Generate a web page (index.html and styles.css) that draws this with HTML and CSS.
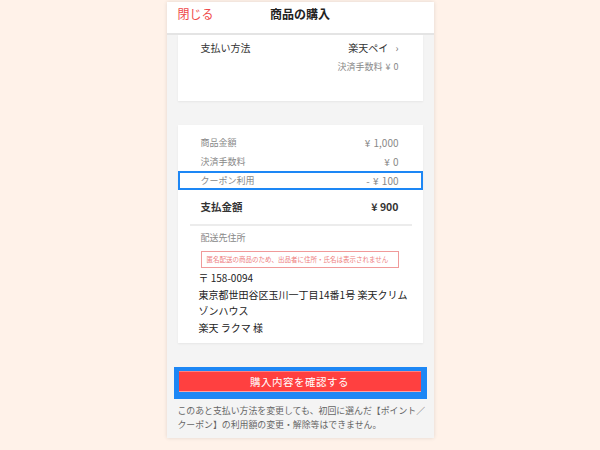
FILE: index.html
```html
<!DOCTYPE html>
<html lang="ja">
<head>
  <meta charset="UTF-8" />
  <meta name="viewport" content="width=device-width, initial-scale=1.0" />
  <title>商品の購入</title>
  <link rel="stylesheet" href="styles.css">
</head>
<body>

  <div class="phone">
    <!-- Header -->
    <header class="topbar">
      <span class="close">閉じる</span>
      <h1>商品の購入</h1>
    </header>

    <div class="content">
      <!-- Payment method -->
      <section class="card pay-card">
        <div class="pay-row">
          <span>支払い方法</span>
          <span class="pay-value">楽天ペイ <span class="chev">›</span></span>
        </div>
        <div class="fee-note">決済手数料 ¥ 0</div>
      </section>

      <!-- Summary -->
      <section class="card summary">
        <div class="row"><span>商品金額</span><span class="num">¥ 1,000</span></div>
        <div class="row"><span>決済手数料</span><span class="num">¥ 0</span></div>
        <div class="row coupon"><span>クーポン利用</span><span class="num">- ¥ 100</span></div>
        <div class="row total"><span>支払金額</span><span>¥ 900</span></div>
        <hr class="divider">
        <div class="addr-label">配送先住所</div>
        <div class="anon-note">匿名配送の商品のため、出品者に住所・氏名は表示されません</div>
        <div class="address">
          <p>〒 158-0094</p>
          <p>東京都世田谷区玉川一丁目14番1号 楽天クリム</p>
          <p>ゾンハウス</p>
          <p>楽天 ラクマ 様</p>
        </div>
      </section>

      <!-- Confirm -->
      <div class="confirm-wrap">
        <button class="confirm-btn">購入内容を確認する</button>
      </div>
      <p class="after-note">このあと支払い方法を変更しても、初回に選んだ【ポイント／<br>クーポン】の利用額の変更・解除等はできません。</p>
    </div>
  </div>

</body>
</html>
```

FILE: styles.css
```css
/* Reset */
* {
  margin: 0;
  padding: 0;
  box-sizing: border-box;
}
body {
  font-family: "Noto Sans CJK JP", "Noto Sans", sans-serif;
  background: #fff2e9;
  color: #333;
  height: 100vh;
  overflow: hidden;
}

/* Phone frame */
.phone {
  width: 267px;
  margin: 2px auto 0;
  background: #f4f4f4;
  box-shadow: 0 0 4px rgba(0, 0, 0, 0.12);
}

/* Header */
.topbar {
  position: relative;
  height: 33px;
  background: #fff;
  border-bottom: 2px solid #e4e4e4;
  display: flex;
  justify-content: center;
  padding-top: 4px;
}
.topbar h1 {
  font-size: 12px;
  font-weight: bold;
  color: #222;
  line-height: 16px;
}
.close {
  position: absolute;
  left: 11px;
  top: 4px;
  font-size: 12px;
  line-height: 16px;
  color: #ef4a4a;
}

/* Content */
.content {
  padding: 0 11px;
}
.card {
  background: #fff;
  box-shadow: 0 1px 2px rgba(0, 0, 0, 0.06);
}

/* Payment card */
.pay-card {
  height: 66px;
  padding: 2px 24px 0 23px;
}
.pay-row {
  height: 20px;
  display: flex;
  justify-content: space-between;
  align-items: center;
  font-size: 10px;
  color: #333;
}
.chev {
  color: #777;
  margin-left: 5px;
}
.fee-note {
  margin-top: 1px;
  text-align: right;
  font-size: 9px;
  color: #888;
  line-height: 18px;
  word-spacing: 1px;
}

/* Summary card */
.summary {
  margin-top: 24px;
  padding: 8px 0 7px;
}
.row {
  height: 19px;
  padding: 0 24px 0 23px;
  display: flex;
  justify-content: space-between;
  align-items: center;
  font-size: 9px;
  color: #888;
}
.num {
  font-size: 10px;
  word-spacing: 1px;
}
.coupon {
  box-shadow: inset 0 0 0 2px #1d87f5;
}
.total {
  height: 32px;
  font-size: 10.5px;
  font-weight: bold;
  color: #333;
}
.divider {
  border: none;
  height: 2px;
  background: #ececec;
  margin: 2px 11px 0 12px;
}
.addr-label {
  padding: 0 23px;
  margin-top: 4px;
  font-size: 9px;
  color: #888;
  line-height: 16px;
}
.anon-note {
  margin: 5px 24px 0 23px;
  height: 17px;
  border: 1px solid #f09a9a;
  font-size: 6.5px;
  color: #ee8080;
  line-height: 15px;
  padding-left: 5px;
  white-space: nowrap;
  overflow: hidden;
}
.address {
  padding: 2px 10px 0 21px;
  font-size: 10px;
  color: #222;
  line-height: 16.5px;
  white-space: nowrap;
}

/* Confirm button */
.confirm-wrap {
  margin: 24px -4px 0 -4px;
  background: #1d87f5;
  padding: 4px 6px 7px 5px;
}
.confirm-btn {
  display: block;
  width: 100%;
  height: 21px;
  background: #ff4040;
  border: none;
  border-top: 1px solid #ff8080;
  border-bottom: 1px solid #ffa0a0;
  color: #fff;
  font-family: inherit;
  font-size: 10.5px;
  letter-spacing: 0.5px;
}
.after-note {
  padding: 5px 0 6px;
  font-size: 8.9px;
  color: #666;
  line-height: 14px;
  white-space: nowrap;
}
```
